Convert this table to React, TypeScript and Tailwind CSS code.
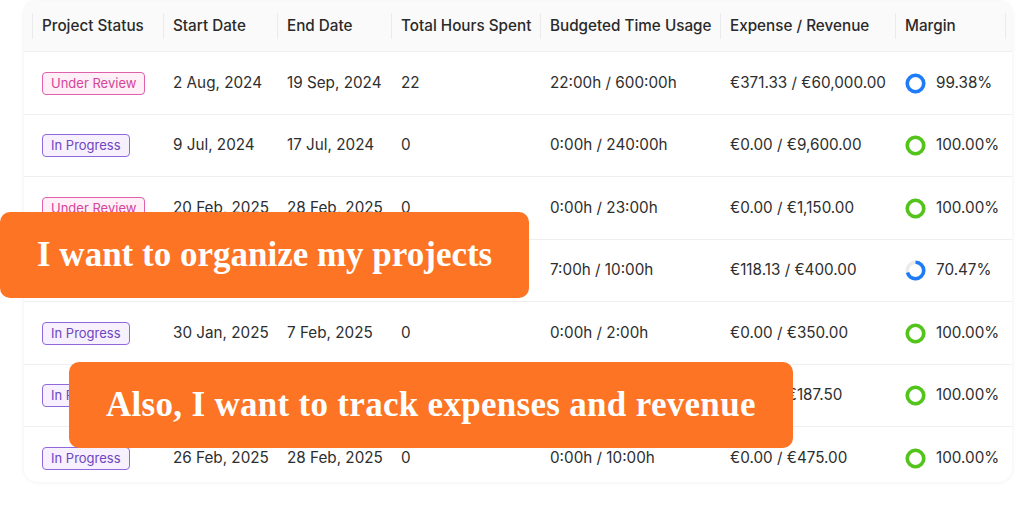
import React from "react";

type Row = {
  status: "review" | "progress";
  start: string;
  end: string;
  hours: string;
  budget: string;
  exp: string;
  margin: string;
  pct: number;
  color: "blue" | "green";
};

const rows: Row[] = [
  { status: "review", start: "2 Aug, 2024", end: "19 Sep, 2024", hours: "22", budget: "22:00h / 600:00h", exp: "€371.33 / €60,000.00", margin: "99.38%", pct: 100, color: "blue" },
  { status: "progress", start: "9 Jul, 2024", end: "17 Jul, 2024", hours: "0", budget: "0:00h / 240:00h", exp: "€0.00 / €9,600.00", margin: "100.00%", pct: 100, color: "green" },
  { status: "review", start: "20 Feb, 2025", end: "28 Feb, 2025", hours: "0", budget: "0:00h / 23:00h", exp: "€0.00 / €1,150.00", margin: "100.00%", pct: 100, color: "green" },
  { status: "progress", start: "3 Mar, 2025", end: "14 Mar, 2025", hours: "7", budget: "7:00h / 10:00h", exp: "€118.13 / €400.00", margin: "70.47%", pct: 70.47, color: "blue" },
  { status: "progress", start: "30 Jan, 2025", end: "7 Feb, 2025", hours: "0", budget: "0:00h / 2:00h", exp: "€0.00 / €350.00", margin: "100.00%", pct: 100, color: "green" },
  { status: "progress", start: "12 Feb, 2025", end: "19 Feb, 2025", hours: "0", budget: "0:00h / 5:00h", exp: "€0.00 / €187.50", margin: "100.00%", pct: 100, color: "green" },
  { status: "progress", start: "26 Feb, 2025", end: "28 Feb, 2025", hours: "0", budget: "0:00h / 10:00h", exp: "€0.00 / €475.00", margin: "100.00%", pct: 100, color: "green" },
];

const headers = [
  { label: "Project Status", w: "w-[131px]" },
  { label: "Start Date", w: "w-[114px]" },
  { label: "End Date", w: "w-[114px]" },
  { label: "Total Hours Spent", w: "w-[149px]" },
  { label: "Budgeted Time Usage", w: "w-[180px]" },
  { label: "Expense / Revenue", w: "w-[175px]" },
  { label: "Margin", w: "w-[111px]" },
];

function Ring({ pct, color }: { pct: number; color: "blue" | "green" }) {
  const r = 8.25;
  const c = 2 * Math.PI * r;
  const stroke = color === "blue" ? "#1f7cf8" : "#52c41a";
  return (
    <svg width="21" height="21" viewBox="0 0 21 21" className="shrink-0">
      <circle cx="10.5" cy="10.5" r={r} fill="none" stroke="#ececec" strokeWidth="3.6" />
      <circle
        cx="10.5"
        cy="10.5"
        r={r}
        fill="none"
        stroke={stroke}
        strokeWidth="3.6"
        strokeDasharray={`${(c * pct) / 100} ${c}`}
        transform="rotate(-90 10.5 10.5)"
      />
    </svg>
  );
}

function Badge({ status }: { status: "review" | "progress" }) {
  if (status === "review") {
    return (
      <span className="inline-flex h-[23px] items-center rounded-[4px] border border-[#e060ac] bg-[#fff0f7] px-[8px] text-[13px] text-[#d4449a]">
        Under Review
      </span>
    );
  }
  return (
    <span className="inline-flex h-[23px] items-center rounded-[4px] border border-[#9168dc] bg-[#f6f0ff] px-[8px] text-[13px] text-[#6f45c0]">
      In Progress
    </span>
  );
}

export default function App() {
  return (
    <div
      className="relative h-[521px] w-[1035px] overflow-hidden bg-white"
      style={{ fontFamily: "Inter, 'Noto Sans', sans-serif" }}
    >
      <div className="ml-[24px] mt-[1px] h-[481px] w-[988px] overflow-hidden rounded-[14px] bg-white shadow-[0_0_5px_rgba(0,0,0,0.07)]">
        <div className="flex h-[51px] items-center border-b border-[#efefef] bg-[#fafafa] pl-[8px] text-[15.25px] font-medium text-[#2a2a2a]">
          {headers.map((h, i) => (
            <div key={h.label} className={`flex h-full items-center ${h.w}`}>
              <span className="h-[26px] w-px bg-[#ebebeb]" />
              <span className="ml-[9px] whitespace-nowrap">{h.label}</span>
              {i === headers.length - 1 && <span className="ml-auto h-[26px] w-px bg-[#ebebeb]" />}
            </div>
          ))}
        </div>
        {rows.map((r, idx) => (
          <div
            key={idx}
            className="flex h-[62.5px] items-center border-b border-[#efefef] pl-[8px] pt-[1px] text-[15.25px] text-[#2e2e2e]"
          >
            <div className="w-[131px] pl-[10px]">
              <Badge status={r.status} />
            </div>
            <div className="w-[114px] whitespace-nowrap pl-[10px]">{r.start}</div>
            <div className="w-[114px] whitespace-nowrap pl-[10px]">{r.end}</div>
            <div className="w-[149px] whitespace-nowrap pl-[10px]">{r.hours}</div>
            <div className="w-[180px] whitespace-nowrap pl-[10px]">{r.budget}</div>
            <div className="w-[175px] whitespace-nowrap pl-[10px]">{r.exp}</div>
            <div className="flex w-[111px] items-center gap-[10px] whitespace-nowrap pl-[10px]">
              <Ring pct={r.pct} color={r.color} />
              <span>{r.margin}</span>
            </div>
          </div>
        ))}
      </div>

      <div
        className="absolute left-0 top-[212px] flex h-[86px] items-center rounded-[10px] bg-[#fc7424] px-[37px] text-[35px] font-bold text-white"
        style={{ fontFamily: "'Liberation Serif', serif" }}
      >
        I want to organize my projects
      </div>
      <div
        className="absolute left-[69px] top-[362px] flex h-[86px] items-center rounded-[10px] bg-[#fc7424] px-[37px] text-[35px] font-bold tracking-[0.3px] text-white"
        style={{ fontFamily: "'Liberation Serif', serif" }}
      >
        Also, I want to track expenses and revenue
      </div>
    </div>
  );
}
